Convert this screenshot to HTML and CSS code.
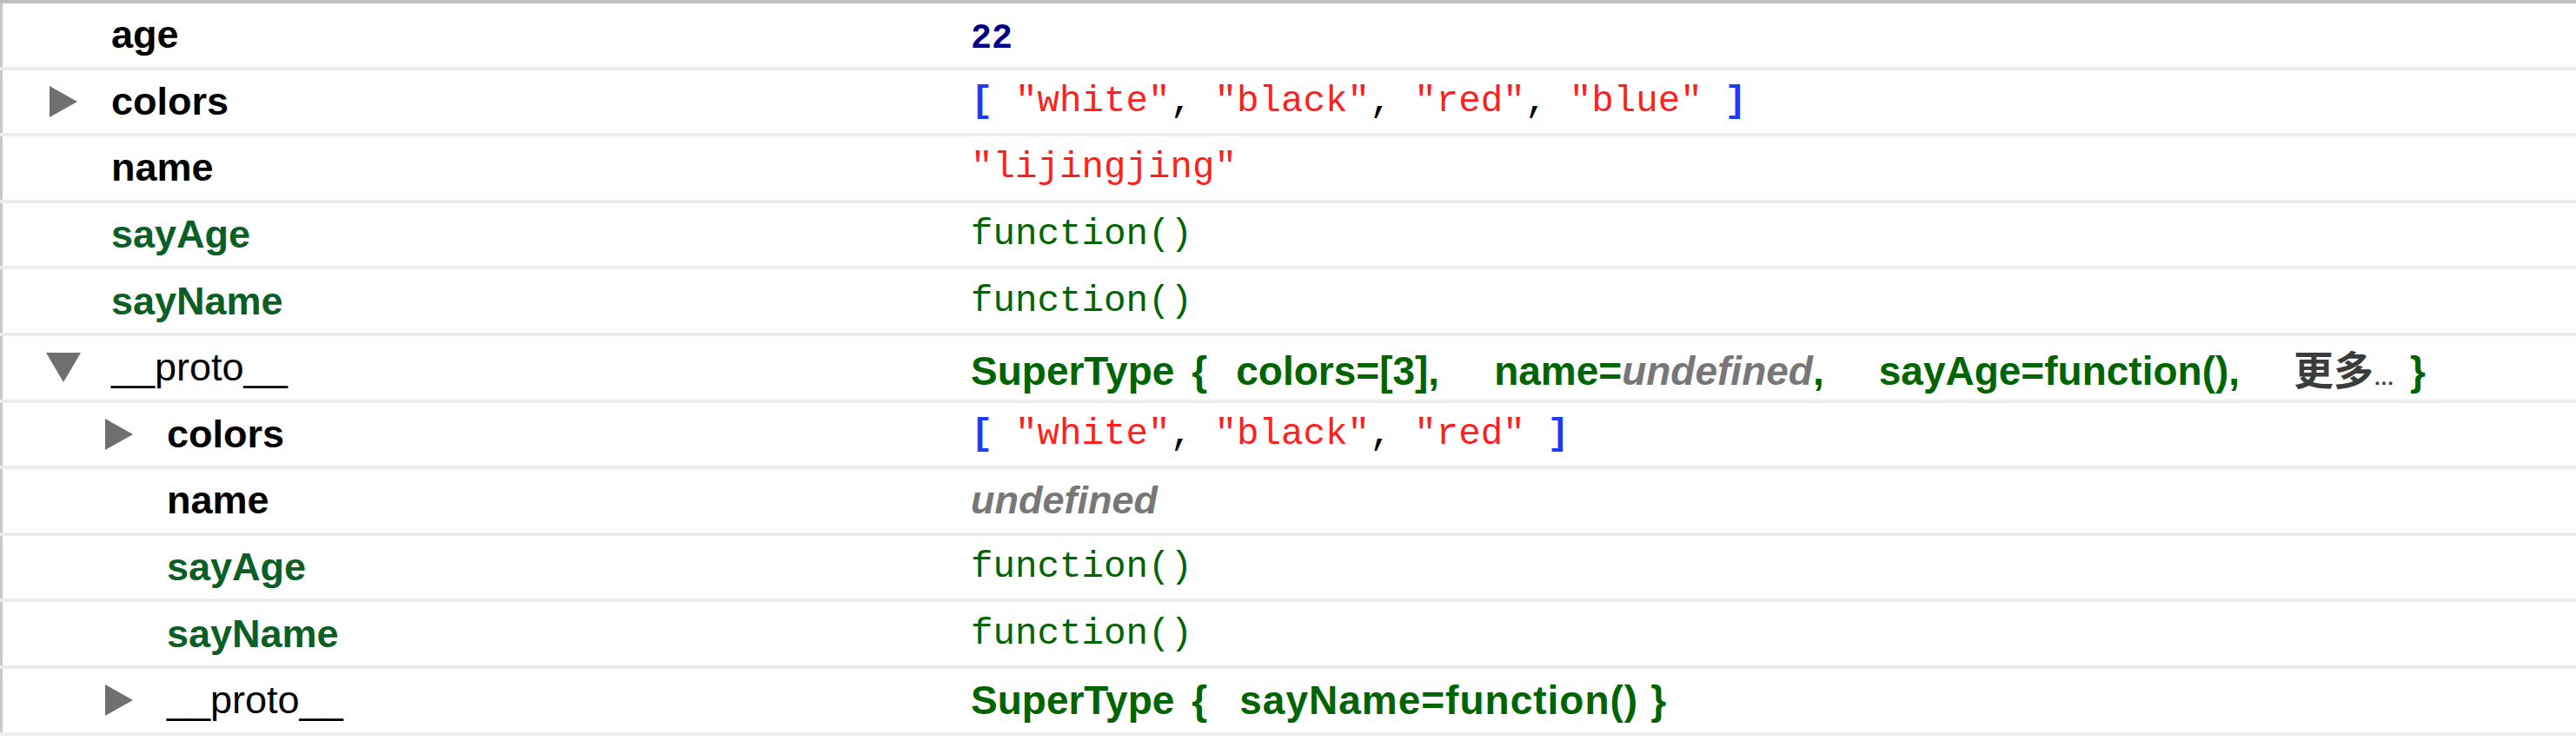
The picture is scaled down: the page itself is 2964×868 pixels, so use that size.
FILE: index.html
```html
<!DOCTYPE html>
<html>
<head>
<meta charset="utf-8">
<link rel="stylesheet" href="styles.css">
</head>
<body>
<div class="tree">
  <div class="row">
    <div class="key"><span class="twisty"></span><span class="label">age</span></div>
    <div class="val"><span class="num">22</span></div>
  </div>
  <div class="row">
    <div class="key"><span class="twisty"><svg class="tri" width="32" height="36" viewBox="0 0 32 36"><polygon points="0,0 32,18 0,36" /></svg></span><span class="label">colors</span></div>
    <div class="val mono"><span class="br">[</span> <span class="str">"white"</span>, <span class="str">"black"</span>, <span class="str">"red"</span>, <span class="str">"blue"</span> <span class="br">]</span></div>
  </div>
  <div class="row">
    <div class="key"><span class="twisty"></span><span class="label">name</span></div>
    <div class="val mono"><span class="str">"lijingjing"</span></div>
  </div>
  <div class="row">
    <div class="key"><span class="twisty"></span><span class="label fnlabel">sayAge</span></div>
    <div class="val mono"><span class="fn">function()</span></div>
  </div>
  <div class="row">
    <div class="key"><span class="twisty"></span><span class="label fnlabel">sayName</span></div>
    <div class="val mono"><span class="fn">function()</span></div>
  </div>
  <div class="row">
    <div class="key"><span class="twisty"><svg class="tri down" width="40" height="34" viewBox="0 0 40 34"><polygon points="0,0 40,0 20,34" /></svg></span><span class="label proto">__proto__</span></div>
    <div class="val summary"><span class="cls">SuperType</span><span class="brace">{</span><span class="prop first">colors=[3],</span><span class="prop">name=<span class="undef">undefined</span>,</span><span class="prop">sayAge=function(),</span><span class="more">更多<span class="dots">…</span></span><span class="brace close">}</span></div>
  </div>
  <div class="row lvl1">
    <div class="key"><span class="twisty"><svg class="tri" width="32" height="36" viewBox="0 0 32 36"><polygon points="0,0 32,18 0,36" /></svg></span><span class="label">colors</span></div>
    <div class="val mono"><span class="br">[</span> <span class="str">"white"</span>, <span class="str">"black"</span>, <span class="str">"red"</span> <span class="br">]</span></div>
  </div>
  <div class="row lvl1">
    <div class="key"><span class="twisty"></span><span class="label">name</span></div>
    <div class="val"><span class="undef">undefined</span></div>
  </div>
  <div class="row lvl1">
    <div class="key"><span class="twisty"></span><span class="label fnlabel">sayAge</span></div>
    <div class="val mono"><span class="fn">function()</span></div>
  </div>
  <div class="row lvl1">
    <div class="key"><span class="twisty"></span><span class="label fnlabel">sayName</span></div>
    <div class="val mono"><span class="fn">function()</span></div>
  </div>
  <div class="row lvl1">
    <div class="key"><span class="twisty"><svg class="tri" width="32" height="36" viewBox="0 0 32 36"><polygon points="0,0 32,18 0,36" /></svg></span><span class="label proto">__proto__</span></div>
    <div class="val summary"><span class="cls">SuperType</span><span class="brace">{</span><span class="prop first single">sayName=function()</span><span class="brace close2">}</span></div>
  </div>
</div>
</body>
</html>
```

FILE: styles.css
```css
html, body {
  margin: 0;
  padding: 0;
  background: #ffffff;
}

.tree {
  border-top: 4px solid #bfbfbf;
}

.row {
  display: grid;
  grid-template-columns: 1114px 1fr;
  align-items: center;
  height: 72.6px;
  padding-left: 3px;
  box-shadow: inset 3px 0 0 #c9c9c9;
  border-bottom: 4px solid #ececec;
}

.key {
  display: flex;
  align-items: center;
  padding-left: 54px;
}

.lvl1 .key {
  padding-left: 118px;
}

.twisty {
  flex: none;
  width: 71px;
  height: 36px;
  display: flex;
  align-items: center;
}

.tri polygon {
  fill: #6f6f6f;
}

.tri.down {
  margin-left: -4px;
}

.label {
  font-family: "Liberation Sans", Arial, sans-serif;
  font-weight: bold;
  font-size: 45px;
  color: #000000;
  white-space: nowrap;
}

.label.fnlabel {
  color: #0b5e25;
}

.label.proto {
  font-weight: normal;
}

.val {
  white-space: nowrap;
  font-family: "Liberation Sans", Arial, sans-serif;
  font-size: 45px;
}

.mono {
  font-family: "Liberation Mono", "Courier New", monospace;
  font-size: 42.5px;
  color: #000000;
}

.num {
  font-family: "Liberation Mono", "Courier New", monospace;
  font-size: 40px;
  font-weight: bold;
  color: #000088;
}

.br {
  color: #1a3cff;
  font-weight: bold;
}

.str {
  color: #ff1f1f;
}

.fn {
  color: #006400;
}

.undef {
  color: #777777;
  font-style: italic;
  font-weight: bold;
}

.summary {
  font-weight: bold;
  font-size: 46px;
  color: #006400;
}

.cls {
  color: #006400;
}

.brace {
  margin-left: 20px;
}

.brace.close {
  margin-left: 18px;
}

.brace.close2 {
  margin-left: 14px;
}

.prop {
  margin-left: 63px;
}

.prop.first {
  margin-left: 33px;
}

.prop.single {
  margin-left: 37px;
  letter-spacing: 1px;
}

.more {
  margin-left: 62px;
  color: #3c3c3c;
  font-family: "Noto Sans CJK SC", "Liberation Sans", sans-serif;
  font-size: 46px;
}

.dots {
  font-family: "Liberation Sans", sans-serif;
  font-size: 24px;
}
```
